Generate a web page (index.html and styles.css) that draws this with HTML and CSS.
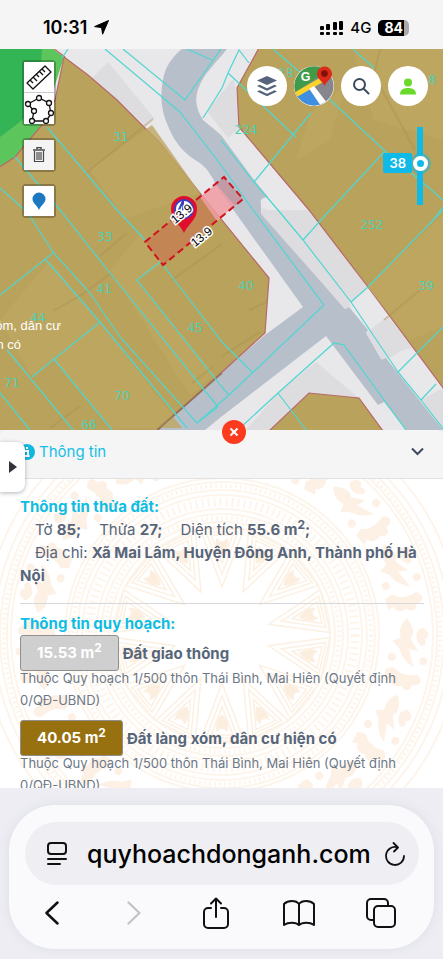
FILE: index.html
```html
<!DOCTYPE html>
<html lang="vi">
<head>
  <meta charset="utf-8">
  <meta name="viewport" content="width=device-width, initial-scale=1">
  <title>Thông tin quy hoạch</title>
  <link rel="stylesheet" href="styles.css">
</head>
<body>
<header class="status">
  <div class="status-side">
    <span class="time">10:31</span>
    <svg width="15" height="15" viewBox="0 0 15 15"><path d="M14.5 .5 8.6 14.2 7.6 7.6 .6 6.6z" stroke="#000" stroke-linejoin="round"/></svg>
  </div>
  <div class="status-side">
    <svg width="23" height="16" viewBox="0 0 23 16">
      <g fill="#000">
        <rect y="6" width="4" height="4" rx="1"/><rect x="6" y="4" width="4" height="6" rx="1"/><rect x="13" y="2" width="4" height="8" rx="1"/><rect x="19" y="1" width="4" height="9" rx="1"/>
        <rect y="12" width="4" height="3" rx="1"/><rect x="6" y="12" width="4" height="3" rx="1"/><rect x="13" y="12" width="4" height="3" rx="1"/><rect x="19" y="12" width="4" height="3" rx="1"/>
      </g>
    </svg>
    <span class="network">4G</span>
    <span class="battery">84</span>
  </div>
</header>

<main class="map">
  <svg class="map-canvas" viewBox="0 49 443 381" preserveAspectRatio="xMidYMid slice">
    <rect y="49" width="443" height="381" fill="#e8e7e9"/>
    <!-- building footprints -->
    <g fill="#dddcdf">
      <path d="M108 62 154 118 146 126 92 78z"/>
      <path d="M263 210 309 210 368 287 349 303z"/>
      <path d="M366 333 388 316 412 348 403 350 386 360z"/>
      <path d="M207 111 234 78 240 127 228 138z"/>
      <path d="M278 393 316 362 359 398 309 393 269 430 246 430z"/>
      <path d="M421 400 443 388 443 430z"/>
    </g>
    <!-- roads -->
    <path fill="#b6bfca" d="M182 49C172 57 165 67 163 80C160 96 161 110 168 126C175 143 184 154 200 163C208 169 213 178 217 187L303 307 265 335 221 373 156 430H205L221 417 326 336 378 405 384 402 406 430H443L386 358 381 359 366 333 368 330 349 307 345 309 261 212C262 203 257 198 268 197L254 180 221 135 203 120C196 109 194 99 199 87C204 73 217 62 227 49z"/>
    <path fill="#dddce1" d="M263 208 270 211 351 305 345 309 261 214z M366 333 371 332 388 356 382 360z"/>
    <!-- green land -->
    <path fill="#5cc65c" d="M0 49H53L64 57 42 125 15 157 0 167z"/>
    <path fill="#34b555" d="M0 49H42C40 80 36 112 16 125L0 137z"/>
    <!-- residential land -->
    <g fill="#b9a25b" stroke="#b9686a" stroke-width="1.2">
      <path d="M64 57 88 75 117 100 160 143 200 193 269 278 265 333 221 373 157 431H-2V168L15 157 42 125 55 100z"/>
      <path d="M259 48 237 88 239 127 309 210 368 287 444 389V48z"/>
      <path d="M269 431 309 393 359 398 383 431z"/>
    </g>
    <path d="M53 48 65 57" stroke="#b9686a" stroke-width="1.2"/>
    <g fill="#bfa862" opacity=".8">
      <path d="M90 170 152 125 200 193 125 218z"/>
      <path d="M0 320 50 260 98 322 32 376z"/>
      <path d="M53 358 100 322 182 428H112z"/>
      <path d="M110 270 140 234 165 262 137 280 215 375 190 395z"/>
      <path d="M368 287 443 215V327L410 340z"/>
      <path d="M311 113 345 85 330 140 296 160z"/>
      <path d="M353 49H443V140L374 120z"/>
    </g>
    <g stroke="#a8924f" stroke-width="2" fill="none" opacity=".4">
      <path d="M85 174 153 119M53 311 80 296 110 274M100 256 127 233M172 280 222 244M50 428 80 406M192 383 213 367M249 310 267 302M384 320 420 290M380 49 374 75 415 150M222 356 260 332"/>
    </g>
    <path d="M157 430 222 373" stroke="#86684a" stroke-width="2" opacity=".6"/>
    <!-- parcel borders -->
    <g class="parcels">
      <path d="M0 188 27 212 53 252 90 293 120 337 197 423 218 407"/>
      <path d="M45 259 100 322 187 428"/>
      <path d="M15 157 60 210 110 273 218 407"/>
      <path d="M47 127 117 210 145 240M163 265 222 342 253 373"/>
      <path d="M160 262 137 280 222 387 229 395"/>
      <path d="M0 295 53 253M32 377 100 322M7 350 73 430M53 358 112 430M0 393 30 430"/>
      <path d="M105 49 180 112 221 165 253 210 324 305 229 395 197 423"/>
      <path d="M123 49 185 100 221 49M187 49 212 60M62 58 68 49"/>
      <path d="M203 118 222 88 228 73 239 50 249 63M228 73 243 87 296 137"/>
      <path d="M273 49 311 82 386 152 428 187 443 200M353 49 374 68"/>
      <path d="M254 182 311 113M303 240 321 220 384 152M221 140 254 182 278 210 303 240 351 302 398 372 421 400 445 431"/>
      <path d="M351 302 368 287 443 210M398 372 443 327M421 400 436 384"/>
      <path d="M240 428 278 393 334 343 344 345 406 430M278 393 306 430M430 224 443 207"/>
    </g>
    <g class="parcel-no">
      <text x="121" y="141">31</text>
      <text x="246" y="134">224</text>
      <text x="105" y="241">33</text>
      <text x="104" y="293">41</text>
      <text x="38" y="322">44</text>
      <text x="195" y="332">45</text>
      <text x="246" y="290">40</text>
      <text x="372" y="229">252</text>
      <text x="426" y="290">39</text>
      <text x="12" y="387">71</text>
      <text x="122" y="400">70</text>
      <text x="89" y="429">66</text>
      <text x="286" y="77">18</text>
      <text x="432" y="84">8</text>
    </g>
    <g class="land-name">
      <text x="61" y="330">xóm, dân cư</text>
      <text x="21" y="349">hiện có</text>
    </g>
    <!-- selected parcel -->
    <path d="M200 197 217 185 235 206 217 221z" fill="#f6c8cd" opacity=".8"/>
    <path d="M145 242 224 177 243 199 163 265z" fill="#e0303a" fill-opacity=".25" stroke="#cf1420" stroke-width="2" stroke-dasharray="7 4"/>
    <path d="M184 233C180 224 171 220 171 209A13 13 0 0 1 197 209C197 220 188 224 184 233z" fill="#e20d2c"/>
    <circle cx="184" cy="209" r="9" fill="#fff" stroke="#3a3fc0" stroke-width="2"/>
    <path d="M178 212 183 201V209L190 205" stroke="#3a3fc0" stroke-width="2" fill="none"/>
    <g class="edge-len">
      <text transform="translate(184 217) rotate(-39)">13.9</text>
      <text transform="translate(204 240) rotate(-39)">13.9</text>
    </g>
  </svg>

  <div class="tools">
    <div class="tool-group">
      <button class="tool" aria-label="Đo khoảng cách">
        <svg width="28" height="28" viewBox="0 0 28 28" fill="none" stroke="#111" stroke-width="1.3"><path d="M2 20 20 3 26 9 8 26z" stroke-linejoin="round"/><path d="m5 17 3 3M8 14l4 4M11 11l3 3M14 8l4 4M17 6l3 3"/></svg>
      </button>
      <button class="tool" aria-label="Đo diện tích">
        <svg width="30" height="30" viewBox="0 0 30 30" fill="#fff" stroke="#111" stroke-width="1.3"><path d="M4 10 15 4 25 9 27 20 22 27H8L10 17z"/><circle cx="4" cy="10" r="2.500"/><circle cx="15" cy="4" r="2.500"/><circle cx="25" cy="9" r="2.500"/><circle cx="27" cy="19" r="2.500"/><circle cx="22" cy="27" r="2.500"/><circle cx="8" cy="27" r="2.500"/><circle cx="10" cy="17" r="2.500"/></svg>
      </button>
    </div>
    <div class="tool-group">
      <button class="tool tool-off" aria-label="Xóa">
        <svg width="12" height="16" viewBox="0 0 12 16" fill="none" stroke="#484848"><path d="M4 2V.5h4V2M0 3h12" stroke-width="1.500"/><path d="M1.500 4v10.500h9V4M4 5v8M6 5v8M8 5v8" stroke-width="1.200"/></svg>
      </button>
    </div>
    <div class="tool-group">
      <button class="tool" aria-label="Đánh dấu">
        <svg width="14" height="19" viewBox="0 0 14 19"><path d="M7 18C5 13 .5 11 .5 7a6.500 6.500 0 0 1 13 0C13.500 11 9 13 7 18z" fill="#1d78bf"/></svg>
      </button>
    </div>
  </div>

  <nav class="actions">
    <button class="round" aria-label="Lớp bản đồ">
      <svg width="22" height="22" viewBox="0 0 22 22" fill="#56657c"><path d="M11 1 21 5.500 11 10 1 5.500z"/><path d="m1 11 2.500-1.200L11 13.200l7.500-3.400L21 11l-10 4.700z"/><path d="m1 16.500 2.500-1.200L11 18.700l7.500-3.400 2.500 1.200-10 4.700z"/></svg>
    </button>
    <button class="round" aria-label="Google Maps">
      <svg width="42" height="42" viewBox="0 0 42 42">
        <defs><clipPath id="disc"><circle cx="21" cy="21" r="20.500"/></clipPath></defs>
        <g clip-path="url(#disc)">
          <rect width="42" height="42" fill="#87858d"/>
          <path d="M0 0H42L0 29z" fill="#3f9a49"/>
          <path d="M2 30 18 21 34 42H0z" fill="#3f8fe0"/>
          <path d="M0 28 26 13 30 17 2 33z" fill="#fbd32b"/>
          <path d="M16 24 21 21 35 39 29 43z" fill="#fff"/>
        </g>
        <text class="g-mark" x="7" y="16">G</text>
        <path d="M32 21C30 16 24 13 24 8.500a8 8 0 0 1 16 0C40 13 34 16 32 21z" fill="#dc2b18"/>
        <circle cx="32" cy="8" r="3.500" fill="#7d120c"/>
      </svg>
    </button>
    <button class="round" aria-label="Tìm kiếm">
      <svg width="18" height="18" viewBox="0 0 18 18" fill="none" stroke="#3c4a60" stroke-width="2" stroke-linecap="round"><circle cx="7.500" cy="7.500" r="5.500"/><path d="m12 12 4.500 4.500"/></svg>
    </button>
    <button class="round" aria-label="Tài khoản">
      <svg width="16" height="17" viewBox="0 0 16 17" fill="#6bd92c"><circle cx="8" cy="4.500" r="4"/><path d="M0 16.500C0 12 3 10 8 10s8 2 8 6.500z"/></svg>
    </button>
  </nav>

  <div class="opacity">
    <label class="opacity-value" for="opacity">38</label>
    <input class="opacity-slider" id="opacity" type="range" min="0" max="70" value="38">
  </div>
</main>

<section class="panel">
  <button class="close" aria-label="Đóng">
    <svg width="10" height="10" viewBox="0 0 10 10" stroke="#fff" stroke-width="2"><path d="m1.500 1.500 7 7M8.500 1.500l-7 7"/></svg>
  </button>
  <button class="side-tab" aria-label="Mở menu">
    <svg width="8" height="12" viewBox="0 0 8 12"><path d="M0 0 8 6 0 12z" fill="#33333b"/></svg>
  </button>
  <div class="panel-head">
    <h1 class="panel-title">
      <svg width="16" height="16" viewBox="0 0 16 16"><circle cx="8" cy="8" r="8" fill="#12b7e0"/><path d="M6 7h3v5M5.500 12h5M7 4h2" stroke="#fff" stroke-width="2" fill="none"/></svg>
      Thông tin
    </h1>
    <button class="collapse" aria-label="Thu gọn">
      <svg width="13" height="9" viewBox="0 0 13 9" fill="none" stroke="#3c4a60" stroke-width="2"><path d="m1 1.500 5.500 5.500L12 1.500"/></svg>
    </button>
  </div>
  <div class="panel-body">
    <!-- bronze drum watermark -->
    <svg class="drum" viewBox="-250 -250 500 500" fill="none" stroke="#fdf5eb">
      <defs>
        <g id="ray">
          <path d="M-22-106 0-48 22-106z M-16-103 0-61 16-103z M-11-100 0-72 11-100z"/>
          <path d="M-5-96C-7-90-4-84 0-80 4-84 7-90 5-96 2-92-2-92-5-96z" fill="#fceede"/>
        </g>
        <g id="bird" fill="#fdf1e5" stroke="none">
          <path d="M-36-182C-28-190-22-192-16-188L-4-197-6-187 12-194C8-186 3-181-5-178L-12-170-16-178C-22-176-28-175-36-182z"/>
          <path d="M14-174C20-180 22-188 19-198 25-206 31-202 30-194 37-194 37-186 32-184 34-177 31-172 26-172L28-166H16z"/>
          <path d="M-28-198C-26-206-20-208-17-202-11-206-8-200-12-197-18-192-24-192-28-198z"/>
          <circle cx="4" cy="-171" r="4"/><circle cx="5" cy="-203" r="4"/>
        </g>
      </defs>
      <g stroke-width="2">
        <circle r="108"/><circle r="113"/><circle r="121"/><circle r="126"/><circle r="140"/><circle r="145"/><circle r="153"/><circle r="157"/>
        <circle r="211"/><circle r="215"/><circle r="222"/><circle r="228"/><circle r="238"/>
      </g>
      <circle r="117" stroke-width="4" stroke-dasharray="2 3"/>
      <circle r="133" stroke-width="9" stroke-dasharray="2 4"/>
      <circle r="149" stroke-width="4" stroke-dasharray="2 3"/>
      <circle r="218" stroke-width="4" stroke-dasharray="2 3"/>
      <g stroke="#fcf0e2" stroke-width="1.500">
        <use href="#ray" transform="rotate(0)"/><use href="#ray" transform="rotate(26)"/><use href="#ray" transform="rotate(51)"/><use href="#ray" transform="rotate(77)"/><use href="#ray" transform="rotate(103)"/><use href="#ray" transform="rotate(129)"/><use href="#ray" transform="rotate(154)"/><use href="#ray" transform="rotate(180)"/><use href="#ray" transform="rotate(206)"/><use href="#ray" transform="rotate(231)"/><use href="#ray" transform="rotate(257)"/><use href="#ray" transform="rotate(283)"/><use href="#ray" transform="rotate(309)"/><use href="#ray" transform="rotate(334)"/>
      </g>
      <use href="#bird"/><use href="#bird" transform="rotate(24)"/><use href="#bird" transform="rotate(48)"/><use href="#bird" transform="rotate(72)"/><use href="#bird" transform="rotate(96)"/><use href="#bird" transform="rotate(120)"/><use href="#bird" transform="rotate(144)"/><use href="#bird" transform="rotate(168)"/><use href="#bird" transform="rotate(192)"/><use href="#bird" transform="rotate(216)"/><use href="#bird" transform="rotate(240)"/><use href="#bird" transform="rotate(264)"/><use href="#bird" transform="rotate(288)"/><use href="#bird" transform="rotate(312)"/><use href="#bird" transform="rotate(336)"/>
    </svg>
    <div class="info">
      <h2>Thông tin thửa đất:</h2>
      <p class="facts"><span>Tờ <b>85;</b></span> <span>Thửa <b>27;</b></span> <span>Diện tích <b>55.6 m<sup>2</sup>;</b></span></p>
      <p class="address">Địa chỉ: <b>Xã Mai Lâm, Huyện Đông Anh, Thành phố Hà Nội</b></p>
      <hr>
      <h2>Thông tin quy hoạch:</h2>
      <div class="plan">
        <div class="plan-row"><span class="area area-road">15.53 m<sup>2</sup></span><b>Đất giao thông</b></div>
        <p>Thuộc Quy hoạch 1/500 thôn Thái Bình, Mai Hiên (Quyết định 0/QĐ-UBND)</p>
      </div>
      <div class="plan">
        <div class="plan-row"><span class="area area-village">40.05 m<sup>2</sup></span><b>Đất làng xóm, dân cư hiện có</b></div>
        <p>Thuộc Quy hoạch 1/500 thôn Thái Bình, Mai Hiên (Quyết định 0/QĐ-UBND)</p>
      </div>
    </div>
  </div>
</section>

<footer class="browser">
  <div class="browser-card">
    <div class="url-bar">
      <button class="bar-btn" aria-label="Menu trang">
        <svg width="20" height="24" viewBox="0 0 20 24" fill="none" stroke="#111" stroke-width="2" stroke-linecap="round"><rect x="1" y="1" width="18" height="11" rx="3"/><path d="M1 17h18M1 22h12"/></svg>
      </button>
      <input class="url" type="text" aria-label="Địa chỉ" value="quyhoachdonganh.com">
      <button class="bar-btn" aria-label="Tải lại">
        <svg width="20" height="24" viewBox="0 0 20 24" fill="none" stroke="#111" stroke-width="1.800" stroke-linecap="round" stroke-linejoin="round"><path d="M12 5.200A9 9 0 1 0 19 14"/><path d="m8.500 1 4.500 4.500L9 9.500"/></svg>
      </button>
    </div>
    <nav class="browser-nav">
      <button class="bar-btn" aria-label="Quay lại"><svg width="14" height="24" viewBox="0 0 14 24" fill="none" stroke="#111" stroke-width="2.500" stroke-linecap="round" stroke-linejoin="round"><path d="M12.500 1.500 1.500 12l11 10.500"/></svg></button>
      <button class="bar-btn" aria-label="Tiến" disabled><svg width="14" height="24" viewBox="0 0 14 24" fill="none" stroke="#c2c2c7" stroke-width="2.200" stroke-linecap="round" stroke-linejoin="round"><path d="m1.500 1.500 11 10.500-11 10.500"/></svg></button>
      <button class="bar-btn" aria-label="Chia sẻ"><svg width="26" height="32" viewBox="0 0 26 32" fill="none" stroke="#111" stroke-width="2" stroke-linecap="round" stroke-linejoin="round"><path d="M8 11H5a4 4 0 0 0-4 4v12a4 4 0 0 0 4 4h16a4 4 0 0 0 4-4V15a4 4 0 0 0-4-4h-3M13 20V2M8 6.500l5-5 5 5"/></svg></button>
      <button class="bar-btn" aria-label="Dấu trang"><svg width="32" height="26" viewBox="0 0 32 26" fill="none" stroke="#111" stroke-width="2" stroke-linejoin="round"><path d="M16 4C13 0 5 0 1 4v21c4-3 12-3 15 0 3-3 11-3 15 0V4C27 0 19 0 16 4zM16 4v21"/></svg></button>
      <button class="bar-btn" aria-label="Thẻ"><svg width="30" height="30" viewBox="0 0 30 30" fill="none" stroke="#111" stroke-width="2"><rect x="8" y="8" width="21" height="21" rx="4"/><path d="M8 22H5a4 4 0 0 1-4-4V5a4 4 0 0 1 4-4h13a4 4 0 0 1 4 4v3"/></svg></button>
    </nav>
  </div>
</footer>
</body>
</html>
```
FILE: styles.css
```css
* {
  box-sizing: border-box;
}
body {
  margin: 0;
  min-height: 100vh;
  display: flex;
  flex-direction: column;
  background: #ededf3;
  color: #566579;
  font-family: Inter, "Liberation Sans", Arial, sans-serif;
  font-size: 15px;
}
button {
  display: flex;
  align-items: center;
  justify-content: center;
  padding: 0;
  border: 0;
  background: none;
}
h1, h2, p {
  margin: 0;
}

/* status bar */
.status {
  display: flex;
  justify-content: space-between;
  align-items: center;
  padding: 14px 34px 8px 43px;
  background: #f5f5f5;
  color: #000;
}
.status-side {
  display: flex;
  align-items: center;
  gap: 7px;
  line-height: 27px;
}
.time {
  font-size: 18px;
  font-weight: 600;
}
.network {
  font-size: 15px;
  font-weight: 500;
}
.battery {
  padding: 0 6px;
  border-radius: 5px;
  background: linear-gradient(90deg, #000 84%, #aaa 84%);
  color: #fff;
  font-size: 14px;
  font-weight: 700;
  line-height: 16px;
}

/* map */
.map {
  position: relative;
}
.map-canvas {
  display: block;
  width: 100%;
  height: 381px;
}
.parcels {
  fill: none;
  stroke: #4fd6d2;
  stroke-width: 1.2;
}
.parcel-no {
  fill: #4fd0b4;
  font-family: "DejaVu Sans", sans-serif;
  font-size: 12px;
  text-anchor: middle;
}
.land-name {
  fill: #fff;
  font-family: "Liberation Sans", Arial, sans-serif;
  font-size: 13px;
  text-anchor: end;
}
.edge-len {
  fill: #000;
  stroke: #fff;
  stroke-width: 3px;
  paint-order: stroke;
  font-family: "Liberation Sans", Arial, sans-serif;
  font-size: 12px;
  text-anchor: middle;
}
.tools {
  position: absolute;
  top: 11px;
  left: 22px;
  display: flex;
  flex-direction: column;
  gap: 12px;
}
.tool-group {
  border: 2px solid rgba(0, 0, 0, .25);
  border-radius: 4px;
}
.tool {
  width: 30px;
  height: 30px;
  background: #fff;
}
.tool + .tool {
  border-top: 1px solid #ccc;
  height: 32px;
}
.tool-off {
  background: #f4f4f4;
}
.actions {
  position: absolute;
  top: 17px;
  right: 15px;
  display: flex;
  gap: 7px;
}
.round {
  width: 40px;
  height: 40px;
  border-radius: 50%;
  background: #fff;
}
.g-mark {
  fill: #fff;
  font-size: 13px;
  font-weight: 700;
}
.opacity {
  position: absolute;
  top: 78px;
  right: 15px;
  display: flex;
  align-items: center;
}
.opacity-value {
  padding: 0 6px;
  border-radius: 2px;
  background: #0fb9e8;
  color: #fff;
  font-size: 13px;
  font-weight: 600;
  line-height: 20px;
  margin-bottom: 6px;
}
.opacity-slider {
  -webkit-appearance: none;
  appearance: none;
  writing-mode: vertical-lr;
  direction: rtl;
  width: 16px;
  height: 78px;
  margin: 0;
  background: linear-gradient(#0fb9e8, #0fb9e8) center / 6px 100% no-repeat;
}
.opacity-slider::-webkit-slider-thumb {
  -webkit-appearance: none;
  width: 15px;
  height: 15px;
  border: 4px solid #fff;
  border-radius: 50%;
  background: #0fb9e8;
  box-shadow: 0 0 0 3px rgba(15, 185, 232, .5);
}

/* info panel */
.panel {
  position: relative;
  display: flex;
  flex-direction: column;
}
.panel-head {
  display: flex;
  justify-content: space-between;
  align-items: center;
  padding: 0 19px 5px;
  border-bottom: 1px solid #dfe1e4;
  border-radius: 6px 6px 0 0;
  background: #f5f5f5;
}
.panel-title {
  display: flex;
  align-items: center;
  gap: 4px;
  color: #16bfe4;
  font-size: 15px;
  font-weight: 400;
  line-height: 43px;
}
.close {
  position: absolute;
  top: -10px;
  left: 50%;
  width: 24px;
  height: 24px;
  border-radius: 50%;
  background: #fb3a1e;
}
.side-tab {
  position: absolute;
  top: 12px;
  left: 0;
  width: 25px;
  height: 50px;
  border-radius: 0 8px 8px 0;
  background: #fff;
  box-shadow: 0 1px 4px rgba(0, 0, 0, .3);
  z-index: 1;
}
.panel-body {
  position: relative;
  height: 309px;
  overflow: hidden;
  background: #fff;
}
.drum {
  position: absolute;
  top: -94px;
  left: 50%;
  width: 500px;
  margin-left: -250px;
}
.info {
  position: relative;
  padding: 16px 19px 0 20px;
  line-height: 23px;
}
.info h2 {
  color: #0fbde4;
  font-size: 15px;
  font-weight: 700;
}
.info b {
  font-weight: 700;
}
.info sup {
  font-size: 12px;
  line-height: 0;
}
.facts {
  display: flex;
  gap: 18px;
  padding-left: 15px;
}
.address {
  text-indent: 15px;
}
.info hr {
  margin: 16px 0 8px;
  border: 0;
  border-top: 1px solid #d5d8dc;
}
.plan {
  margin-bottom: 9px;
}
.plan-row {
  position: relative;
  display: flex;
  align-items: center;
  gap: 4px;
  margin-bottom: -4px;
}
.area {
  padding: 0 16px;
  border: 1px solid #8f8f8f;
  border-radius: 3px;
  color: #fff;
  font-weight: 700;
  line-height: 34px;
}
.area-road {
  background: #cfcfcf;
}
.area-village {
  background: #97700f;
}
.plan p {
  color: #6c7888;
  font-size: 13px;
  line-height: 22px;
}

/* browser bar */
.browser {
  flex: 1;
  padding: 17px 9px 8px;
}
.browser-card {
  padding: 17px 0 20px;
  border-radius: 46px;
  background: #fafafd;
  box-shadow: 0 0 12px rgba(100, 100, 130, .1);
}
.url-bar {
  display: flex;
  align-items: center;
  margin: 0 15px 0 16px;
  padding: 0 14px 0 22px;
  border-radius: 32px;
  background: #eeeef3;
}
.url {
  flex: 1;
  min-width: 0;
  height: 63px;
  padding: 0 0 0 20px;
  border: 0;
  background: none;
  color: #000;
  font-family: inherit;
  font-size: 25px;
  font-weight: 500;
}
.browser-nav {
  display: grid;
  grid-template-columns: repeat(5, 1fr);
  align-items: center;
  padding: 12px 12px 0 2px;
}
```
